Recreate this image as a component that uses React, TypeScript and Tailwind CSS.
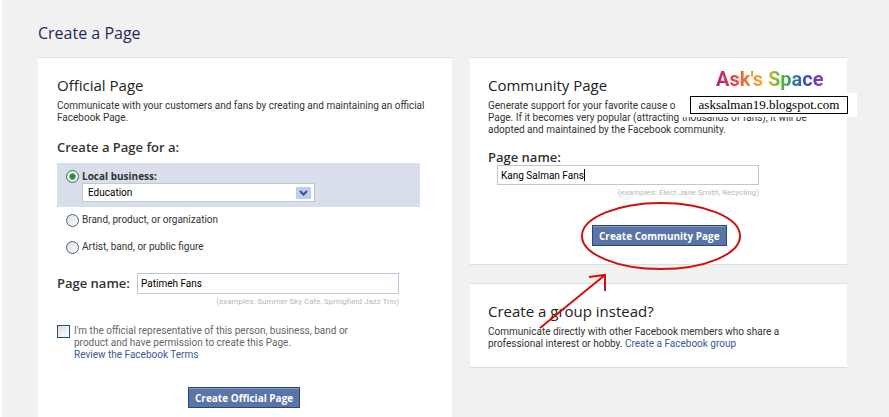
import type { ReactNode } from 'react';
import { useState } from 'react';

const pageTypes = [
  { id: 'brand', label: 'Brand, product, or organization' },
  { id: 'artist', label: 'Artist, band, or public figure' },
];

const radioClass =
  'size-3.25 shrink-0 appearance-none rounded-full border border-[#3c6480] bg-linear-to-br from-[#dcdcd6] to-white checked:bg-radial checked:from-[#2f8a34] checked:from-30% checked:to-[#e9f5e6] checked:to-50%';

function Card({ className = '', children }: { className?: string; children: ReactNode }) {
  return <section className={`border-y border-[#dedede] bg-white ${className}`}>{children}</section>;
}

function CardTitle({ children }: { children: ReactNode }) {
  return <h2 className="font-['Open_Sans',sans-serif] text-[15px] leading-5 font-medium text-[#222]">{children}</h2>;
}

function SubmitButton({ children }: { children: ReactNode }) {
  return (
    <button
      type="submit"
      className="h-[21px] border border-[#29447e] bg-[#5b74a8] px-1.5 font-['Open_Sans',sans-serif] text-[10px] leading-4 font-bold whitespace-nowrap text-white shadow-[inset_0_1px_0_#8a9cc2]"
    >
      {children}
    </button>
  );
}

function OfficialPage() {
  const [type, setType] = useState('local');

  return (
    <Card className="px-[19px] pt-[17px] pb-6">
      <form onSubmit={e => e.preventDefault()}>
        <CardTitle>Official Page</CardTitle>
        <p className="mt-[5px] leading-3 whitespace-nowrap">
          Communicate with your customers and fans by creating and maintaining an official
          <br />
          Facebook Page.
        </p>
        <h3 className="mt-[13px] font-['Open_Sans',sans-serif] text-[13px] leading-5 font-semibold">Create a Page for a:</h3>

        <div className="mt-1.5 mr-[13px] h-11 bg-[#d8dfea] pt-1.5 pl-[9px]">
          <label className="flex items-center gap-[3px] font-['Open_Sans',sans-serif] leading-3.5 font-bold">
            <input type="radio" name="type" checked={type === 'local'} onChange={() => setType('local')} className={radioClass} />
            Local business:
          </label>
          <div className="ml-4 grid w-[233px] items-center">
            <select
              aria-label="Business category"
              className="col-start-1 row-start-1 h-[19px] appearance-none border border-[#bdc7d8] bg-white pl-[5px] text-black"
            >
              <option>Education</option>
            </select>
            <span className="pointer-events-none col-start-1 row-start-1 mr-1 flex h-3 w-[15px] items-center justify-center justify-self-end bg-[#bccdf4]">
              <svg viewBox="0 0 9 6" className="h-1.5 w-[9px]" fill="none" stroke="#3a5082" strokeWidth="2">
                <path d="M1 1l3.5 3.5L8 1" />
              </svg>
            </span>
          </div>
        </div>

        <div className="mt-1.5 flex flex-col gap-[13px] pl-[9px]">
          {pageTypes.map(t => (
            <label key={t.id} className="flex items-center gap-[3px] leading-3.5">
              <input type="radio" name="type" checked={type === t.id} onChange={() => setType(t.id)} className={radioClass} />
              {t.label}
            </label>
          ))}
        </div>

        <div className="mt-[19px] flex items-center">
          <label htmlFor="official-name" className="w-20 font-['Open_Sans',sans-serif] text-[13px] font-semibold">Page name:</label>
          <input id="official-name" defaultValue="Patimeh Fans" className="h-[21px] w-[262px] border border-[#bdc7d8] px-[3px] text-black" />
        </div>
        <p className="mt-0.5 w-[342px] text-right text-[8px] leading-3 text-[#b8b8b8]">
          (examples: Summer Sky Cafe, Springfield Jazz Trio)
        </p>

        <div className="mt-[17px] flex items-start gap-1 leading-3 text-[#666]">
          <input id="representative" type="checkbox" className="size-3.25 shrink-0 appearance-none border border-[#1c5180] bg-linear-to-br from-[#dcdcd7] to-white" />
          <div>
            <label htmlFor="representative" className="block">
              I'm the official representative of this person, business, band or
              <br />
              product and have permission to create this Page.
            </label>
            <a href="#terms" className="text-[#3b5998]">Review the Facebook Terms</a>
          </div>
        </div>

        <div className="mt-[26px] pl-[131px]">
          <SubmitButton>Create Official Page</SubmitButton>
        </div>
      </form>
    </Card>
  );
}

function Watermark() {
  return (
    <div className="absolute top-2 -right-2.5 w-[175px]">
      <p className="ml-[34px] w-[108px] bg-[linear-gradient(90deg,#b0207c,#e03848_14%,#f08030_30%,#e8b838_46%,#58b838_60%,#2c9080_70%,#3848c8_84%,#9838c0)] bg-clip-text text-[20px] leading-7 font-bold whitespace-nowrap text-transparent">
        Ask's Space
      </p>
      <div className="bg-white py-[3px] pr-[9px] pl-2">
        <a href="#blog" className="block border border-black bg-white text-center font-['Liberation_Serif',serif] text-[13px] leading-4 text-black">
          asksalman19.blogspot.com
        </a>
      </div>
    </div>
  );
}

function Annotation() {
  return (
    <svg className="pointer-events-none absolute top-[140px] left-0 h-[140px] w-[280px]" viewBox="0 0 280 140" fill="none" stroke="#d01010" strokeWidth="2">
      <ellipse cx="191" cy="39" rx="79" ry="33" />
      <path d="M70 131l65-53M119 80l16-2v16" />
    </svg>
  );
}

function CommunityPage() {
  return (
    <Card className="px-[18px] pt-[17px] pb-[18px]">
      <form onSubmit={e => e.preventDefault()}>
        <CardTitle>Community Page</CardTitle>
        <p className="mt-[5px] leading-3 whitespace-nowrap">
          Generate support for your favorite cause o
          <br />
          Page. If it becomes very popular (attracting thousands of fans), it will be
          <br />
          adopted and maintained by the Facebook community.
        </p>
        <label htmlFor="community-name" className="mt-[13px] block font-['Open_Sans',sans-serif] text-[13px] leading-4 font-semibold">Page name:</label>
        <div className="relative ml-[9px] w-[262px]">
          <input id="community-name" defaultValue="Kang Salman Fans" className="block h-5 w-full border border-[#bdc7d8] px-[3px] text-black" />
          <span className="absolute top-1 left-[87px] h-3 w-px bg-black" />
          <p className="mt-0.5 text-right text-[8px] leading-3 text-[#b8b8b8]">(examples: Elect Jane Smith, Recycling)</p>
        </div>
        <div className="mt-[26px] pl-[104px]">
          <SubmitButton>Create Community Page</SubmitButton>
        </div>
      </form>
    </Card>
  );
}

export default function App() {
  return (
    <div className="min-h-screen border-l-2 border-white bg-[#f1f1f1] pr-[42px] pl-9 font-['Roboto',sans-serif] text-[10px] text-[#333]">
      <h1 className="pt-[23px] pb-3.5 font-['Open_Sans',sans-serif] text-[16px] leading-5 font-medium text-[#1d2a5b]">Create a Page</h1>
      <div className="grid grid-cols-[minmax(0,414fr)_minmax(0,377fr)] gap-[18px]">
        <OfficialPage />
        <div className="relative flex flex-col gap-[18px] self-start">
          <CommunityPage />
          <Card className="px-[18px] pt-[17px] pb-[17px]">
            <CardTitle>Create a group instead?</CardTitle>
            <p className="mt-[5px] leading-3">
              Communicate directly with other Facebook members who share a
              <br />
              professional interest or hobby. <a href="#group" className="text-[#3b5998]">Create a Facebook group</a>
            </p>
          </Card>
          <Watermark />
          <Annotation />
        </div>
      </div>
    </div>
  );
}
